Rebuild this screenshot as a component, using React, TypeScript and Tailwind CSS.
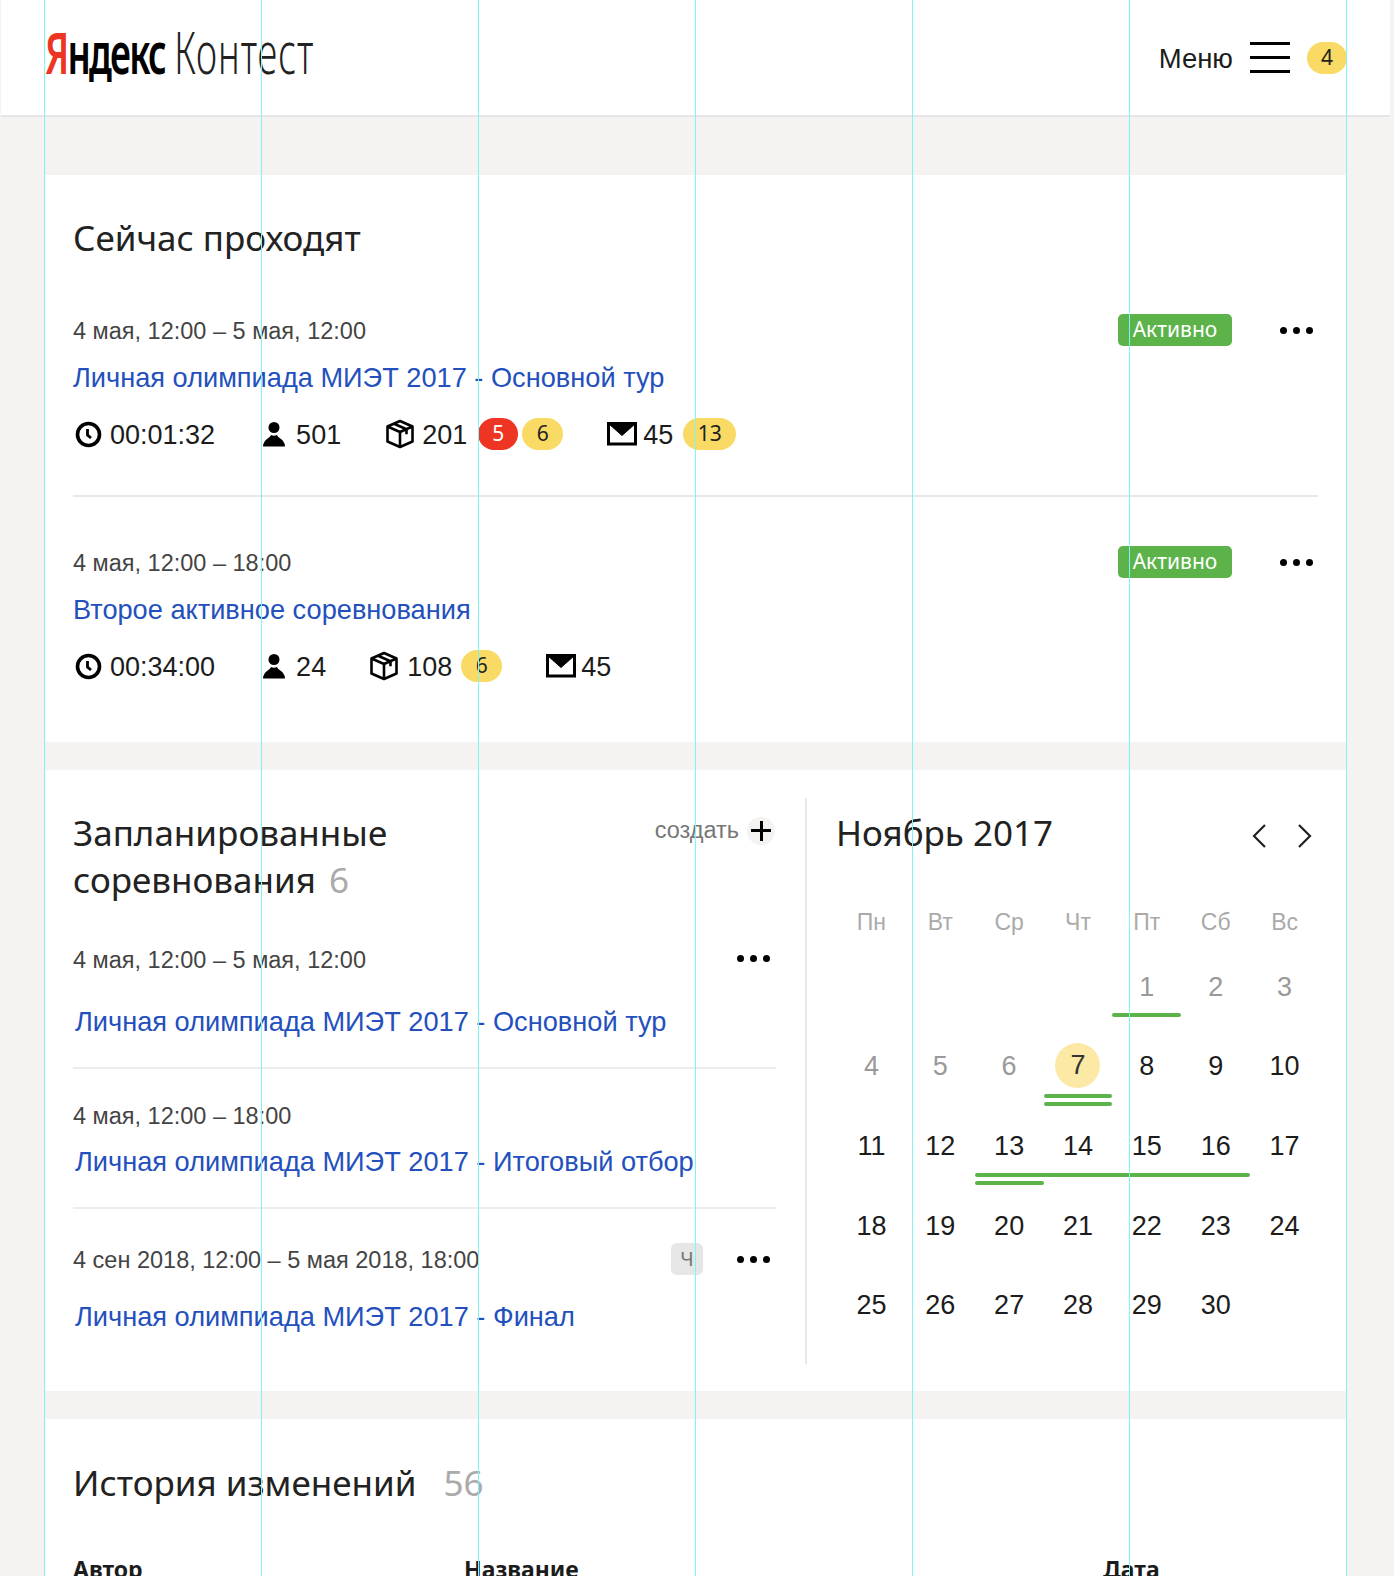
import React from "react";

const Guides = () => (
  <div className="pointer-events-none absolute inset-0">
    {[44, 261, 478, 695, 912, 1129, 1346].map((x) => (
      <div key={x} className="absolute top-0 bottom-0 w-px bg-[#7ff6f6]" style={{ left: x }} />
    ))}
  </div>
);

const Clock = () => (
  <svg width="27" height="27" viewBox="0 0 27 27" fill="none" stroke="#000">
    <circle cx="13.5" cy="13.5" r="11" strokeWidth="3.600" />
    <path d="M12.500 8v6l3.500 3" strokeWidth="2.800" />
  </svg>
);
const Person = () => (
  <svg width="24" height="27" viewBox="0 0 24 27" fill="#000">
    <circle cx="12" cy="6.500" r="5.500" />
    <path d="M1 25.500c0-3 1.500-5.500 4-7.500 2-1.500 3.500-2.500 4-4 2 1 4 1 6 0 .5 1.500 2 2.500 4 4 2.500 2 4 4.500 4 7.500z" />
  </svg>
);
const BoxIcon = () => (
  <svg width="30" height="30" viewBox="0 0 30 30" fill="none" stroke="#000" strokeWidth="2.600" strokeLinejoin="round">
    <path d="M15 2 27.500 7.500v15L15 28 2.500 22.500v-15z" />
    <path d="M2.500 7.500 15 13l12.500-5.500M15 13v15M9 4.700l12.500 5.600v5" />
  </svg>
);
const Mail = () => (
  <svg width="30" height="24" viewBox="0 0 30 24" fill="none" stroke="#000">
    <rect x="1.500" y="1.500" width="27" height="20.500" strokeWidth="3" />
    <path d="M2 2h26L15 13.500z" fill="#000" strokeWidth="1" />
  </svg>
);

const Dots = () => (
  <div className="flex gap-[6px]">
    <span className="h-[7px] w-[7px] rounded-full bg-black" />
    <span className="h-[7px] w-[7px] rounded-full bg-black" />
    <span className="h-[7px] w-[7px] rounded-full bg-black" />
  </div>
);

const Pill = ({ children, red, w }: { children: React.ReactNode; red?: boolean; w: string }) => (
  <span
    className={`flex h-[32px] items-center justify-center rounded-full text-[21px] [font-family:'Noto_Sans',sans-serif] ${w} ${
      red ? "bg-[#ee3524] text-white" : "bg-[#f9da64] text-[#222]"
    }`}
  >
    {children}
  </span>
);

const Active = () => (
  <span className="flex h-[32px] w-[114px] items-center justify-center rounded-[5px] bg-[#5cb34a] text-[21px] text-white [font-family:'Noto_Sans',sans-serif]">
    Активно
  </span>
);

const heading = "text-[#222] [font-family:'Noto_Sans',sans-serif] text-[35px]";
const dateCls = "text-[23.500px] leading-[28px] text-[#444]";
const linkCls = "text-[27.200px] leading-[32px] text-[#2350bd]";

const GRAY_DAYS = ["1", "2", "3", "4", "5", "6"];

const Week = ({ days, children }: { days: (string | null)[]; children?: React.ReactNode }) => (
  <div className="h-[79.600px]">
    <div className="grid h-[45px] grid-cols-7 items-center text-center text-[27px] text-[#1c1c1c]">
      {days.map((d, i) => (
        <span
          key={i}
          className={
            d === "7"
              ? "mx-auto flex h-[45px] w-[45px] -translate-y-[1px] items-center justify-center rounded-full bg-[#fce9a5] text-[#333]"
              : d && GRAY_DAYS.includes(d)
                ? "text-[#999]"
                : ""
          }
        >
          {d}
        </span>
      ))}
    </div>
    {children}
  </div>
);
const Bar = ({ span }: { span: string }) => <div className={`h-[4px] rounded-full bg-[#5cb34a] ${span}`} />;

export default function App() {
  return (
    <div className="relative h-[1576px] overflow-hidden bg-[#f4f3f1] [font-family:'Liberation_Sans',Arial,sans-serif]">
      <header className="ml-px mr-[4px] flex h-[117px] items-center border-b-2 border-[#e6e6e6] bg-white pl-[44px] pr-[43px]">
        <div className="mt-[-12px] flex h-[50px] w-[400px] items-center whitespace-nowrap text-[58px] leading-none [font-family:'Noto_Sans',sans-serif]">
          <span className="origin-left scale-x-[0.63]">
            <span className="font-semibold tracking-[-2.900px]">
              <span className="text-[#ee3524]">Я</span>ндекс
            </span>{" "}
            <span className="font-light tracking-[1.500px] text-[#222]">Контест</span>
          </span>
        </div>
        <div className="ml-auto flex items-center">
          <span className="mt-[2px] text-[27.500px] text-[#1c1c1c]">Меню</span>
          <div className="ml-[17px] flex h-[31px] w-[40px] flex-col justify-between">
            <span className="h-[3px] bg-black" />
            <span className="h-[3px] bg-black" />
            <span className="h-[3px] bg-black" />
          </div>
          <span className="ml-[17px]">
            <Pill w="w-[40px]">4</Pill>
          </span>
        </div>
      </header>

      <main className="mx-[45px] mt-[58px] w-[1301px] space-y-[28px]">
        <section className="h-[567px] bg-white px-[28px] pt-[40px]">
          <h2 className={`${heading} h-[46px] leading-[46px]`}>Сейчас проходят</h2>
          <div className="h-[236px] w-[1245px] border-b-2 border-[#e8e8e8] pt-[53px]">
            <div className="flex items-center justify-between">
              <span className={`${dateCls} pt-[1px]`}>4 мая, 12:00 – 5 мая, 12:00</span>
              <div className="flex items-center">
                <Active />
                <span className="ml-[48px] mr-[5px]"><Dots /></span>
              </div>
            </div>
            <a className={`${linkCls} mt-[16px] block`}>Личная олимпиада МИЭТ 2017 - Основной тур</a>
            <div className="mt-[25px] flex h-[32px] items-center text-[27px] text-[#1c1c1c]">
              <span className="mb-[2px] ml-[2px]"><Clock /></span>
              <span className="ml-[8px]">00:01:32</span>
              <span className="mb-[2px] ml-[47px]"><Person /></span>
              <span className="ml-[10px]">501</span>
              <span className="mb-[2px] ml-[44px]"><BoxIcon /></span>
              <span className="ml-[7px]">201</span>
              <span className="mb-[2px] ml-[11px]"><Pill red w="w-[40px]">5</Pill></span>
              <span className="mb-[2px] ml-[4px]"><Pill w="w-[41px]">6</Pill></span>
              <span className="mb-[2px] ml-[44px]"><Mail /></span>
              <span className="ml-[6px]">45</span>
              <span className="mb-[2px] ml-[10px]"><Pill w="w-[53px]">13</Pill></span>
            </div>
          </div>
          <div className="w-[1245px] pt-[49px]">
            <div className="flex items-center justify-between">
              <span className={`${dateCls} pt-[1px]`}>4 мая, 12:00 – 18:00</span>
              <div className="flex items-center">
                <Active />
                <span className="ml-[48px] mr-[5px]"><Dots /></span>
              </div>
            </div>
            <a className={`${linkCls} mt-[16px] block`}>Второе активное соревнования</a>
            <div className="mt-[25px] flex h-[32px] items-center text-[27px] text-[#1c1c1c]">
              <span className="mb-[2px] ml-[2px]"><Clock /></span>
              <span className="ml-[8px]">00:34:00</span>
              <span className="mb-[2px] ml-[47px]"><Person /></span>
              <span className="ml-[10px]">24</span>
              <span className="mb-[2px] ml-[43px]"><BoxIcon /></span>
              <span className="ml-[8px]">108</span>
              <span className="mb-[2px] ml-[9px]"><Pill w="w-[41px]">6</Pill></span>
              <span className="mb-[2px] ml-[44px]"><Mail /></span>
              <span className="ml-[5px]">45</span>
            </div>
          </div>
        </section>

        <section className="flex h-[621px] bg-white pl-[28px] pt-[28px]">
          <div className="w-[703px] pt-[11px]">
            <div className="flex items-start justify-between">
              <h2 className={`${heading} leading-[47px]`}>
                Запланированные
                <br />
                соревнования <span className="ml-[4px] text-[#aaa]">6</span>
              </h2>
              <div className="mt-[4px] flex items-center">
                <span className="text-[23.500px] text-[#777]">создать</span>
                <span className="relative ml-[8px] mr-[1px] flex h-[28px] w-[28px] items-center justify-center rounded-full bg-[#f4f3f1] text-black">
                  <span className="absolute h-[3px] w-[20px] bg-black" />
                  <span className="absolute h-[20px] w-[3px] bg-black" />
                </span>
              </div>
            </div>
            <div className="mt-[43px] flex items-center justify-between">
              <span className={dateCls}>4 мая, 12:00 – 5 мая, 12:00</span>
              <span className="mb-[4px] mr-[6px]"><Dots /></span>
            </div>
            <a className={`${linkCls} mt-[32px] block pl-[2px]`}>Личная олимпиада МИЭТ 2017 - Основной тур</a>
            <div className="mt-[29px] h-[2px] bg-[#ececec]" />
            <div className="mt-[33px]">
              <span className={dateCls}>4 мая, 12:00 – 18:00</span>
            </div>
            <a className={`${linkCls} mt-[15px] block pl-[2px]`}>Личная олимпиада МИЭТ 2017 - Итоговый отбор</a>
            <div className="mt-[29px] h-[2px] bg-[#ececec]" />
            <div className="mt-[34px] flex items-center justify-between">
              <span className={dateCls}>4 сен 2018, 12:00 – 5 мая 2018, 18:00</span>
              <div className="mb-[2px] flex items-center">
                <span className="flex h-[32px] w-[32px] items-center justify-center rounded-[6px] bg-[#e6e6e6] text-[20px] text-[#777] [font-family:'Noto_Sans',sans-serif]">
                  Ч
                </span>
                <span className="ml-[34px] mr-[6px]"><Dots /></span>
              </div>
            </div>
            <a className={`${linkCls} mt-[24px] block pl-[2px]`}>Личная олимпиада МИЭТ 2017 - Финал</a>
          </div>

          <div className="ml-[29px] h-[566px] w-[2px] bg-[#e8e8e8]" />

          <div className="w-[512px] pl-[29px] pt-[11px]">
            <div className="flex items-center justify-between">
              <h2 className={`${heading} leading-[47px]`}>Ноябрь 2017</h2>
              <div className="mr-[7px] mt-[6px] flex gap-[30px]">
                <svg width="15" height="26" viewBox="0 0 15 26" fill="none" stroke="#222" strokeWidth="2.200"><path d="M13 2 2 13l11 11" /></svg>
                <svg width="15" height="26" viewBox="0 0 15 26" fill="none" stroke="#222" strokeWidth="2.200"><path d="m2 2 11 11L2 24" /></svg>
              </div>
            </div>
            <div className="ml-[1px] mt-[49px] grid h-[30px] grid-cols-7 items-center text-center text-[23px] text-[#aaa]">
              {["Пн", "Вт", "Ср", "Чт", "Пт", "Сб", "Вс"].map((d) => (
                <span key={d}>{d}</span>
              ))}
            </div>
            <div className="ml-[1px] mt-[29.500px]">
              <Week days={[null, null, null, null, "1", "2", "3"]}>
                <div className="mt-[3px] grid grid-cols-7 gap-y-[4px]">
                  <Bar span="col-start-5 col-span-1" />
                </div>
              </Week>
              <Week days={["4", "5", "6", "7", "8", "9", "10"]}>
                <div className="mt-[5px] grid grid-cols-7 gap-y-[4px]">
                  <Bar span="col-start-4 col-span-1" />
                  <Bar span="col-start-4 col-span-1" />
                </div>
              </Week>
              <Week days={["11", "12", "13", "14", "15", "16", "17"]}>
                <div className="mt-[4px] grid grid-cols-7 gap-y-[4px]">
                  <Bar span="col-start-3 col-span-4" />
                  <Bar span="col-start-3 col-span-1" />
                </div>
              </Week>
              <Week days={["18", "19", "20", "21", "22", "23", "24"]} />
              <Week days={["25", "26", "27", "28", "29", "30", null]} />
            </div>
          </div>
        </section>

        <section className="h-[300px] bg-white px-[28px] pt-[41px]">
          <h2 className={`${heading} leading-[46px]`}>
            История изменений <span className="ml-[18px] text-[#aaa]">56</span>
          </h2>
          <div className="mt-[48px] flex text-[23px] font-bold leading-[30px] text-[#1c1c1c] [font-family:'Noto_Sans',sans-serif]">
            <span className="w-[391px]">Автор</span>
            <span className="w-[639px]">Название</span>
            <span>Дата</span>
          </div>
        </section>
      </main>
      <Guides />
    </div>
  );
}
